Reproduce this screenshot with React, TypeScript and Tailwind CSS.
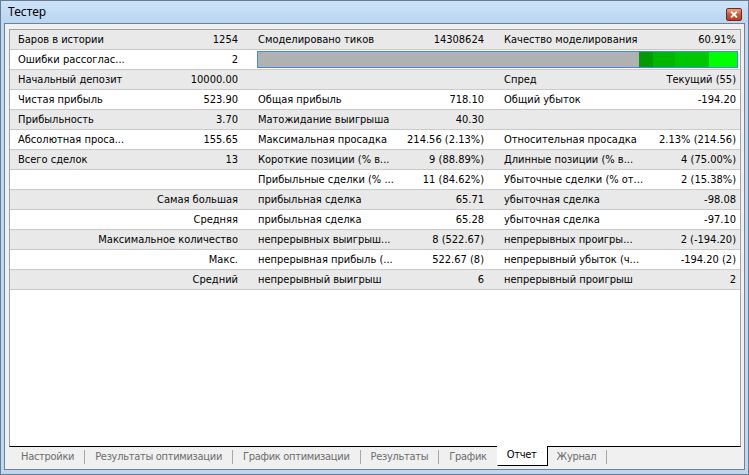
type Pair = [string, string] | null

type Row = {
  a: Pair
  b: Pair
  c: Pair
  caption?: string // подпись справа в первой колонке
  bar?: boolean
}

const rows: Row[] = [
  { a: ["Баров в истории", "1254"], b: ["Смоделировано тиков", "14308624"], c: ["Качество моделирования", "60.91%"] },
  { a: ["Ошибки рассоглас...", "2"], b: null, c: null, bar: true },
  { a: ["Начальный депозит", "10000.00"], b: null, c: ["Спред", "Текущий (55)"] },
  { a: ["Чистая прибыль", "523.90"], b: ["Общая прибыль", "718.10"], c: ["Общий убыток", "-194.20"] },
  { a: ["Прибыльность", "3.70"], b: ["Матожидание выигрыша", "40.30"], c: null },
  { a: ["Абсолютная проса...", "155.65"], b: ["Максимальная просадка", "214.56 (2.13%)"], c: ["Относительная просадка", "2.13% (214.56)"] },
  { a: ["Всего сделок", "13"], b: ["Короткие позиции (% в...", "9 (88.89%)"], c: ["Длинные позиции (% в...", "4 (75.00%)"] },
  { a: null, b: ["Прибыльные сделки (% ...", "11 (84.62%)"], c: ["Убыточные сделки (% от...", "2 (15.38%)"] },
  { a: null, caption: "Самая большая", b: ["прибыльная сделка", "65.71"], c: ["убыточная сделка", "-98.08"] },
  { a: null, caption: "Средняя", b: ["прибыльная сделка", "65.28"], c: ["убыточная сделка", "-97.10"] },
  { a: null, caption: "Максимальное количество", b: ["непрерывных выигрыш...", "8 (522.67)"], c: ["непрерывных проигры...", "2 (-194.20)"] },
  { a: null, caption: "Макс.", b: ["непрерывная прибыль (...", "522.67 (8)"], c: ["непрерывный убыток (ч...", "-194.20 (2)"] },
  { a: null, caption: "Средний", b: ["непрерывный выигрыш", "6"], c: ["непрерывный проигрыш", "2"] },
]

function Cell({ pair, className }: { pair: Pair; className: string }) {
  return (
    <div className={`flex items-center justify-between whitespace-nowrap overflow-hidden ${className}`}>
      {pair && (
        <>
          <span>{pair[0]}</span>
          <span>{pair[1]}</span>
        </>
      )}
    </div>
  )
}

// полоса качества моделирования
function QualityBar() {
  return (
    <div className="flex-1 flex pl-[11px] pr-[2px] py-[1px]">
      <div className="flex-1 flex justify-end border border-[#3c8de3] bg-[#b1b1b1]">
        <div className="w-[14px] bg-[#009c00]" />
        <div className="w-[22px] bg-[#00b700]" />
        <div className="w-[34px] bg-[#00c600]" />
        <div className="w-[28px] bg-[#00ff00]" />
      </div>
    </div>
  )
}

function ReportRow({ row, index }: { row: Row; index: number }) {
  const bg = index % 2 === 0 ? "bg-[#e9e9e9]" : "bg-white"
  return (
    <div className={`flex h-[20px] border-b border-[#cacaca] ${bg}`}>
      {row.caption ? (
        <div className="w-[236px] flex items-center justify-end pr-2 pt-px whitespace-nowrap">{row.caption}</div>
      ) : (
        <Cell pair={row.a} className="w-[236px] pl-2 pr-2 pt-px" />
      )}
      {row.bar ? (
        <QualityBar />
      ) : (
        <>
          <Cell pair={row.b} className="w-[246px] pl-3 pr-2 pt-px" />
          <Cell pair={row.c} className="flex-1 pl-3 pr-1 pt-px" />
        </>
      )}
    </div>
  )
}

function Sep() {
  return <span className="w-px h-[14px] bg-[#a7a7a7]" />
}

function Tab({ label }: { label: string }) {
  return <span className="px-[10px]">{label}</span>
}

export default function App() {
  return (
    <div className="relative w-[749px] h-[475px] flex flex-col border border-[#6a7c91] bg-[#bfd7f0] font-['DejaVu_Sans_Condensed','DejaVu_Sans',sans-serif] text-[11px] text-black">
      {/* заголовок окна */}
      <div className="h-[22px] flex items-center pl-[7px] bg-gradient-to-b from-[#cde3f8] to-[#b9d5f1] font-['Noto_Sans',sans-serif] text-[12px]">
        Тестер
      </div>
      <div className="absolute right-[6px] top-[7px] w-[16px] h-[13px] rounded-[2px] border border-[#6e2b1c] bg-gradient-to-b from-[#e8a08c] via-[#d0573a] to-[#c0391c] flex items-center justify-center">
        <svg width="8" height="7" viewBox="0 0 8 7">
          <path d="M1 0.5 L7 6.5 M7 0.5 L1 6.5" stroke="#ffffff" strokeWidth="1.8" />
        </svg>
      </div>

      <div className="flex-1 flex flex-col px-[3px] pb-[4px]">
        <div className="flex-1 flex flex-col border border-[#6f8196] bg-[#f0f0f0] pt-[5px] pl-[4px] pr-[3px] pb-[2px]">
          {/* таблица отчёта */}
          <div className="flex-1 flex flex-col border-l border-t border-r border-[#a0a0a0] border-b border-b-black bg-white">
            {rows.map((r, i) => (
              <ReportRow key={i} row={r} index={i} />
            ))}
            <div className="flex-1" />
          </div>

          {/* вкладки */}
          <div className="h-[20px] flex items-center pl-[2px] tracking-[-0.3px] text-[#6d6d6d]">
            <Tab label="Настройки" />
            <Sep />
            <Tab label="Результаты оптимизации" />
            <Sep />
            <Tab label="График оптимизации" />
            <Sep />
            <Tab label="Результаты" />
            <Sep />
            <Tab label="График" />
            <div className="relative self-start -mt-px h-[20px] flex items-center pl-[9px] pr-[10px] bg-white border-l border-white border-r border-b border-r-black border-b-black text-black">
              Отчет
            </div>
            <span className="pl-[9px] pr-[10px]">Журнал</span>
            <Sep />
          </div>
        </div>
      </div>
    </div>
  )
}
